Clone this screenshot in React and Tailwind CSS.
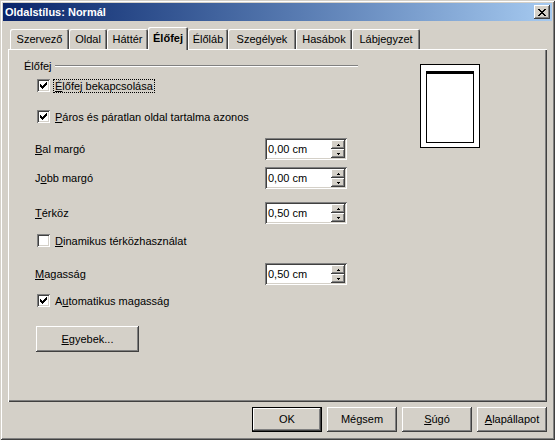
const RAISED =
  'shadow-[inset_-1px_-1px_0_#404040,inset_1px_1px_0_#ffffff,inset_-2px_-2px_0_#808080,inset_2px_2px_0_#d4d0c8]'
const SUNKEN =
  'shadow-[inset_1px_1px_0_#808080,inset_-1px_-1px_0_#ffffff,inset_2px_2px_0_#404040,inset_-2px_-2px_0_#d4d0c8]'

const CHECK = ['......X', '.....XX', 'X...XXX', 'XX.XXX.', 'XXXXX..', '.XXX...', '..X....']
const CLOSE = ['XX....XX', '.XX..XX.', '..XXXX..', '...XX...', '..XXXX..', '.XX..XX.', 'XX....XX']
const UP = ['.X.', 'XXX']
const DOWN = ['XXX', '.X.']

const TABS = [
  { label: 'Szervező', w: 'w-[59px]' },
  { label: 'Oldal', w: 'w-[38px]' },
  { label: 'Háttér', w: 'w-[41px]' },
  { label: 'Élőfej', w: 'w-[40px]', active: true },
  { label: 'Élőláb', w: 'w-[40px]' },
  { label: 'Szegélyek', w: 'w-[68px]' },
  { label: 'Hasábok', w: 'w-[56px]' },
  { label: 'Lábjegyzet', w: 'w-[68px]' },
]

// pixel bitmap, for the tiny classic glyphs
function Bits({ rows }) {
  return (
    <svg width={rows[0].length} height={rows.length} shapeRendering="crispEdges">
      {rows.flatMap((r, y) =>
        [...r].map((c, x) =>
          c === 'X' ? <rect key={`${x}-${y}`} x={x} y={y} width="1" height="1" fill="#000" /> : null,
        ),
      )}
    </svg>
  )
}

// first letter (or given index) underlined, like a Windows accelerator
function Acc({ text, at = 0 }) {
  return (
    <span>
      {text.slice(0, at)}
      <span className="underline underline-offset-[1px]">{text[at]}</span>
      {text.slice(at + 1)}
    </span>
  )
}

function CheckRow({ checked, focus, children }) {
  return (
    <div className="flex h-[13px] items-center pl-[13px]">
      <span className={`flex h-[13px] w-[13px] shrink-0 items-center justify-center bg-white ${SUNKEN}`}>
        {checked && <Bits rows={CHECK} />}
      </span>
      <span
        className={`ml-[3px] border px-[1px] leading-[12px] ${focus ? 'border-dotted border-black' : 'border-transparent'}`}
      >
        {children}
      </span>
    </div>
  )
}

function Spin({ value }) {
  return (
    <div className={`flex h-[22px] w-[82px] items-stretch bg-white p-[2px] ${SUNKEN}`}>
      <span className="flex-1 pl-[1px] leading-[18px]">{value}</span>
      <div className="flex w-[14px] flex-col bg-[#d4d0c8]">
        <span className={`flex h-[9px] items-center justify-center ${RAISED}`}>
          <Bits rows={UP} />
        </span>
        <span className={`flex h-[9px] items-center justify-center ${RAISED}`}>
          <Bits rows={DOWN} />
        </span>
      </div>
    </div>
  )
}

function SpinRow({ label, value, className = '' }) {
  return (
    <div className={`flex h-[22px] items-center pl-[11px] pr-[11px] ${className}`}>
      <span>{label}</span>
      <span className="ml-auto">
        <Spin value={value} />
      </span>
    </div>
  )
}

function Button({ children, def, w = 'w-[70px]', h = 'h-[25px]' }) {
  return (
    <div className={`${w} ${h} ${def ? 'border border-black' : ''}`}>
      <div className={`flex h-full w-full items-center justify-center bg-[#d4d0c8] ${RAISED}`}>{children}</div>
    </div>
  )
}

export default function App() {
  return (
    <div
      className={`h-[440px] w-[555px] bg-[#d4d0c8] p-[3px] font-['Liberation_Sans',Arial,sans-serif] text-[11px] leading-[13px] text-black shadow-[inset_1px_1px_0_#d4d0c8,inset_-1px_-1px_0_#404040,inset_2px_2px_0_#ffffff,inset_-2px_-2px_0_#808080]`}
    >
      <div className="flex h-[18px] items-center bg-linear-to-r from-[#0a246a] to-[#a6caf0] pl-[2px] pr-[2px]">
        <span className="font-bold text-white">Oldalstílus: Normál</span>
        <span className={`ml-auto flex h-[14px] w-[16px] items-center justify-center bg-[#d4d0c8] ${RAISED}`}>
          <Bits rows={CLOSE} />
        </span>
      </div>

      <div className="mx-[5px] mt-[6px]">
        <div className="flex h-[22px] items-end pl-[2px]">
          {TABS.map((t) =>
            t.active ? (
              <div
                key={t.label}
                className={`relative z-10 -mb-px flex h-[23px] ${t.w} items-start justify-center rounded-t-[2px] bg-[#d4d0c8] pt-[5px] font-bold shadow-[inset_1px_1px_0_#ffffff,inset_-1px_0_0_#404040,inset_-2px_0_0_#808080]`}
              >
                {t.label}
              </div>
            ) : (
              <div
                key={t.label}
                className={`flex h-[20px] ${t.w} items-center justify-center rounded-t-[2px] shadow-[inset_1px_1px_0_#ffffff,inset_-1px_0_0_#404040,inset_-2px_0_0_#808080]`}
              >
                {t.label}
              </div>
            ),
          )}
        </div>

        <div className="flex h-[353px] w-[539px] p-px shadow-[inset_1px_1px_0_#ffffff,inset_-1px_-1px_0_#404040,inset_-2px_-2px_0_#808080]">
          <div className="ml-[15px] mt-[10px] flex w-[334px] flex-col">
            <div className="flex h-[13px] items-start">
              <span>Élőfej</span>
              <span className="ml-[3px] mt-[5px] h-[2px] flex-1 border-t border-b border-t-[#808080] border-b-white" />
            </div>
            <div className="mt-[6px]">
              <CheckRow checked focus>
                <Acc text="Élőfej bekapcsolása" />
              </CheckRow>
            </div>
            <div className="mt-[18px]">
              <CheckRow checked>
                <Acc text="Páros és páratlan oldal tartalma azonos" />
              </CheckRow>
            </div>
            <SpinRow className="mt-[15px]" label={<Acc text="Bal margó" />} value="0,00 cm" />
            <SpinRow className="mt-[7px]" label={<Acc text="Jobb margó" at={1} />} value="0,00 cm" />
            <SpinRow className="mt-[13px]" label={<Acc text="Térköz" />} value="0,50 cm" />
            <div className="mt-[10px]">
              <CheckRow>
                <Acc text="Dinamikus térközhasználat" />
              </CheckRow>
            </div>
            <SpinRow className="mt-[16px]" label={<Acc text="Magasság" />} value="0,50 cm" />
            <div className="mt-[9px]">
              <CheckRow checked>
                <Acc text="Automatikus magasság" at={1} />
              </CheckRow>
            </div>
            <div className="mt-[19px] pl-[12px]">
              <Button w="w-[103px]" h="h-[26px]">
                <Acc text="Egyebek..." />
              </Button>
            </div>
          </div>

          <div className="ml-[62px] mt-[14px] h-[84px] w-[60px] border border-black bg-white pl-[5px] pt-[6px]">
            <div className="h-[72px] w-[48px] border border-t-[3px] border-black bg-white" />
          </div>
        </div>

        <div className="mt-[5px] flex justify-end gap-[5px]">
          <Button def>OK</Button>
          <Button>Mégsem</Button>
          <Button>
            <Acc text="Súgó" />
          </Button>
          <Button>
            <Acc text="Alapállapot" />
          </Button>
        </div>
      </div>
    </div>
  )
}
